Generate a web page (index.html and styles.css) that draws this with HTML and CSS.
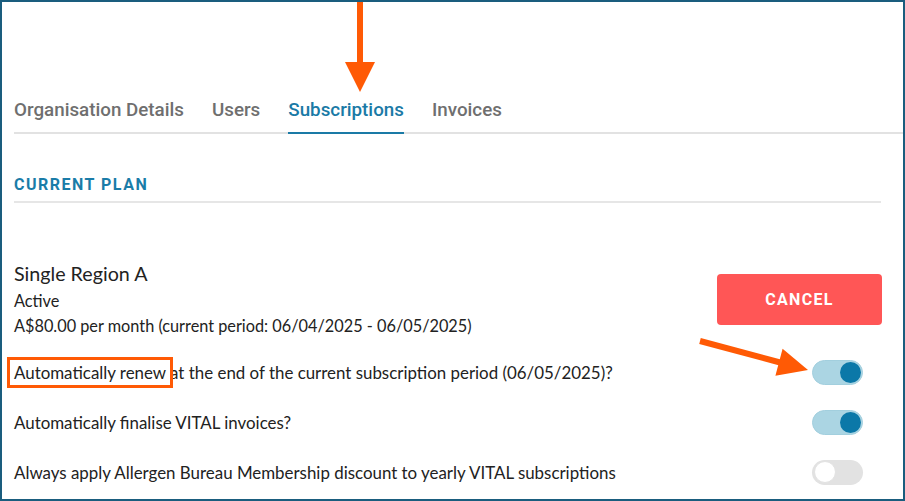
FILE: index.html
```html
<!DOCTYPE html>
<html lang="en">
<head>
<meta charset="utf-8">
<title>Subscriptions</title>
<link rel="stylesheet" href="styles.css">
</head>
<body>
<div class="frame">
  <nav class="tabs">
    <span class="tab">Organisation Details</span>
    <span class="tab">Users</span>
    <span class="tab active">Subscriptions</span>
    <span class="tab">Invoices</span>
  </nav>
  <main class="content">
    <h2 class="section-title">CURRENT PLAN</h2>
    <div class="plan">
      <div class="plan-info">
        <div class="plan-name">Single Region A</div>
        <div class="plan-line">Active</div>
        <div class="plan-line">A$80.00 per month (current period: 06/04/2025 - 06/05/2025)</div>
      </div>
      <button class="cancel">CANCEL</button>
    </div>
    <div class="settings">
      <div class="setting">
        <span>Automatically renew at the end of the current subscription period (06/05/2025)?</span>
        <span class="toggle on"><span class="knob"></span></span>
      </div>
      <div class="setting">
        <span>Automatically finalise VITAL invoices?</span>
        <span class="toggle on"><span class="knob"></span></span>
      </div>
      <div class="setting">
        <span>Always apply Allergen Bureau Membership discount to yearly VITAL subscriptions</span>
        <span class="toggle"><span class="knob"></span></span>
      </div>
    </div>
  </main>
  <div class="highlight-box"></div>
  <svg class="annotations" width="905" height="501" viewBox="0 0 905 501">
    <rect x="357" y="2" width="6" height="62" fill="#ff5a05"/>
    <polygon points="345,62 375,62 360,92" fill="#ff5a05"/>
    <line x1="700" y1="341" x2="782" y2="363" stroke="#ff5a05" stroke-width="6"/>
    <polygon points="782.6,348.7 775.4,375.7 808,370" fill="#ff5a05"/>
  </svg>
</div>
</body>
</html>
```
FILE: styles.css
```css
* { box-sizing: border-box; }
html, body { margin: 0; padding: 0; background: #fff; }
.frame {
  position: relative;
  width: 905px;
  height: 501px;
  border: 2px solid #1a5d7e;
  background: #fff;
  overflow: hidden;
  font-family: Lato, "Noto Sans", sans-serif;
  color: #222;
}
.tabs {
  display: flex;
  gap: 28px;
  margin: 96px 0 0 12px;
  border-bottom: 2px solid #e2e2e2;
}
.tab {
  font-family: Roboto, "Liberation Sans", sans-serif;
  font-weight: 500;
  font-size: 18.8px;
  line-height: 24px;
  color: #6f6f6f;
  padding-bottom: 10px;
}
.tab.active {
  color: #1a7aa6;
  border-bottom: 2px solid #1a7aa6;
  margin-bottom: -2px;
}
.content {
  margin: 0 22px 0 12px;
}
.section-title {
  margin: 41px 0 0;
  font-family: Roboto, "Liberation Sans", sans-serif;
  font-weight: 700;
  font-size: 16px;
  letter-spacing: 1.5px;
  line-height: 20px;
  color: #1a7ca8;
  padding-bottom: 6px;
  border-bottom: 2px solid #e6e6e6;
}
.plan {
  display: flex;
  justify-content: space-between;
  align-items: center;
  margin-top: 58px;
}
.plan-name {
  font-size: 19.7px;
  line-height: 26px;
  margin-bottom: 1px;
  color: #222;
}
.plan-line {
  font-size: 16.3px;
  line-height: 25px;
  color: #222;
}
.cancel {
  width: 165px;
  height: 51px;
  margin-right: -1px;
  border: none;
  border-radius: 4px;
  background: #ff5656;
  color: #fff;
  font-family: Roboto, "Liberation Sans", sans-serif;
  font-weight: 700;
  font-size: 16px;
  letter-spacing: 1.3px;
}
.settings {
  margin-top: 9px;
}
.setting {
  display: flex;
  justify-content: space-between;
  align-items: center;
  height: 50px;
  font-size: 16.9px;
  color: #222;
}
.toggle {
  position: relative;
  width: 51px;
  height: 25px;
  border-radius: 13px;
  background: #e2e2e2;
  margin-right: 18px;
  display: flex;
  align-items: center;
  padding: 0 2px;
}
.toggle.on {
  background: #abd5e3;
  justify-content: flex-end;
  border: 1px solid #a2cfde;
  padding: 0 1px;
}
.knob {
  width: 22px;
  height: 22px;
  border-radius: 50%;
  background: #fff;
  border: 1px solid #e2e2e2;
}
.toggle.on .knob {
  background: #0b78a8;
  border: none;
  width: 21px;
  height: 21px;
}
.highlight-box {
  position: absolute;
  left: 5px;
  top: 355px;
  width: 166px;
  height: 31px;
  border: 3px solid #ff5a05;
}
.annotations {
  position: absolute;
  left: -2px;
  top: -2px;
  pointer-events: none;
}
```
